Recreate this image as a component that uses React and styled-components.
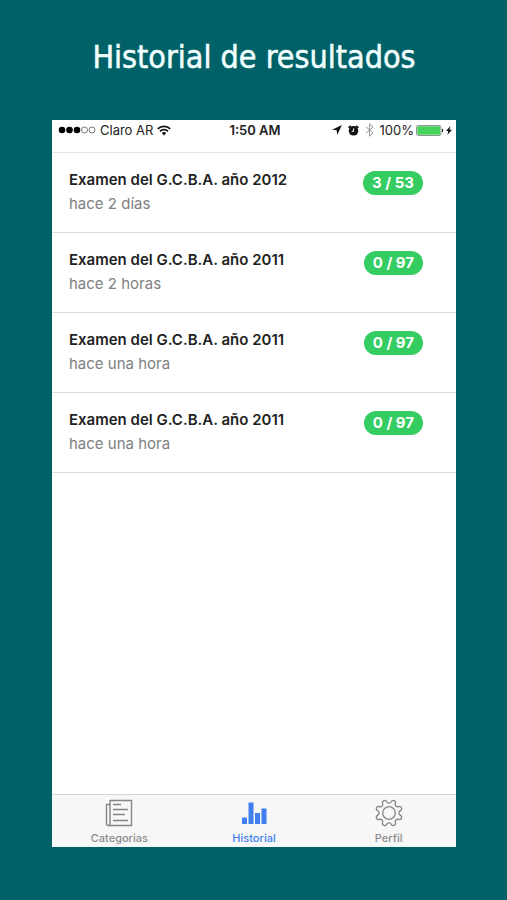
import React, {Component} from "react";
import styled, {createGlobalStyle} from "styled-components";

const GlobalStyle = createGlobalStyle`
  * {
    box-sizing: border-box;
  }
  body {
    margin: 0;
    background: #006268;
    font-family: Inter, "Liberation Sans", sans-serif;
  }
`;
const Page = styled.div`
  min-height: 100vh;
  padding: 0 51px 53px 52px;
  display: flex;
  flex-direction: column;
`;
const PageTitle = styled.h1`
  margin: 37px 0 43px;
  color: #f2ffff;
  font-family: "DejaVu Sans Condensed", "Open Sans", sans-serif;
  font-size: 32px;
  font-weight: 400;
  line-height: 40px;
  text-align: center;
  -webkit-text-stroke: 0.5px #f2ffff;
`;
const Screen = styled.div`
  flex: 1;
  display: flex;
  flex-direction: column;
  background: #fff;
`;
const StatusBar = styled.header`
  height: 33px;
  padding: 2px 4px 0 6px;
  display: grid;
  grid-template-columns: 1fr auto 1fr;
  align-items: start;
  border-bottom: 1px solid #e2e4e5;
  color: #222;
  font-size: 13px;
  line-height: 16px;
`;
const StatusGroup = styled.div`
  height: 16px;
  display: flex;
  align-items: center;
  justify-content: ${props => props.$end ? "flex-end" : "flex-start"};
  gap: ${props => props.$gap}px;
`;
const Clock = styled.time`
  font-weight: 600;
`;
const Results = styled.ul`
  flex: 1;
  margin: 0;
  padding: 0;
  list-style: none;
`;
const ResultRow = styled.li`
  height: 80px;
  padding: 17px 33px 0 17px;
  display: flex;
  justify-content: space-between;
  align-items: flex-start;
  border-bottom: 1px solid #dcdddf;
`;
const ResultTitle = styled.h2`
  margin: 0;
  color: #222;
  font-size: 15px;
  font-weight: 600;
  line-height: 20px;
`;
const ResultDate = styled.p`
  margin: 4px 0 0;
  color: #808080;
  font-size: 15px;
  line-height: 20px;
`;
const Score = styled.span`
  margin-top: 1px;
  padding: 0 9px;
  border-radius: 12px;
  background: #35cc62;
  color: #fff;
  font-size: 15px;
  font-weight: 700;
  line-height: 24px;
`;
const TabBar = styled.nav`
  height: 53px;
  display: flex;
  border-top: 1px solid #d4d6d7;
  background: #f7f7f8;
`;
const Tab = styled.a`
  flex: 1;
  padding-top: 4px;
  display: flex;
  flex-direction: column;
  align-items: center;
  gap: 4px;
  color: ${props => props.$active ? "#3f7ff0" : "#8c8c8c"};
  font-size: 11px;
  font-weight: 500;
  line-height: 14px;
  text-decoration: none;
`;

const results = [
  {id: 1, title: "Examen del G.C.B.A. año 2012", date: "hace 2 días", score: "3 / 53"},
  {id: 2, title: "Examen del G.C.B.A. año 2011", date: "hace 2 horas", score: "0 / 97"},
  {id: 3, title: "Examen del G.C.B.A. año 2011", date: "hace una hora", score: "0 / 97"},
  {id: 4, title: "Examen del G.C.B.A. año 2011", date: "hace una hora", score: "0 / 97"}
];

// Rounded outline of an eight-toothed gear: a smooth curve through the corner polygon
const gearOutline = (center, inner, outer) => {
  const corners = [];
  for (let i = 0; i < 8; i++) {
    [[inner, -9], [inner, 9], [outer, 14], [outer, 31]].forEach(([radius, offset]) => {
      const angle = (i * 45 + offset - 90) * Math.PI / 180;
      corners.push([center + radius * Math.cos(angle), center + radius * Math.sin(angle)]);
    });
  }
  const middle = (a, b) => `${(a[0] + b[0]) / 2} ${(a[1] + b[1]) / 2}`;
  const curves = corners.map((corner, i) => (
    `Q${corner[0]} ${corner[1]} ${middle(corner, corners[(i + 1) % corners.length])}`
  ));
  return `M${middle(corners[corners.length - 1], corners[0])}${curves.join("")}Z`;
};

const SignalIcon = () => (
  <svg width="38" height="8" viewBox="0 0 38 8" aria-hidden="true">
    <g fill="#000">
      <circle cx="4" cy="4" r="3.3"/>
      <circle cx="11.5" cy="4" r="3.3"/>
      <circle cx="19" cy="4" r="3.3"/>
    </g>
    <g fill="none" stroke="#555" strokeWidth="0.8">
      <circle cx="26.5" cy="4" r="3"/>
      <circle cx="34" cy="4" r="3"/>
    </g>
  </svg>
);
const WifiIcon = () => (
  <svg width="14" height="11" viewBox="0 0 14 11" aria-hidden="true">
    <g fill="none" stroke="#111" strokeWidth="1.7">
      <path d="M0.8 3.9a8.8 8.8 0 0 1 12.4 0"/>
      <path d="M3 6.3a5.6 5.6 0 0 1 8 0"/>
    </g>
    <path d="M4.8 8.1a3.1 3.1 0 0 1 4.4 0L7 10.4z" fill="#111"/>
  </svg>
);
const LocationIcon = () => (
  <svg width="10" height="10" viewBox="0 0 10 10" aria-hidden="true">
    <path d="M9.9 0.1L0.2 4.8L4.7 5.3L5.2 9.9z" fill="#111"/>
  </svg>
);
const AlarmIcon = () => (
  <svg width="11" height="11" viewBox="0 0 11 11" aria-hidden="true">
    <circle cx="5.5" cy="5.8" r="4.8" fill="#111"/>
    <path d="M0.6 2.9L2.9 0.8M10.4 2.9L8.1 0.8" stroke="#111" strokeWidth="1.6"/>
    <path d="M5.6 3.4v2.9H3.7" fill="none" stroke="#fff" strokeWidth="1"/>
  </svg>
);
const BluetoothIcon = () => (
  <svg width="9" height="14" viewBox="0 0 9 14" aria-hidden="true">
    <path d="M1 3.8l7 6.2-3.5 3.2V0.8L8 4 1 10.2" fill="none" stroke="#999" strokeWidth="1"/>
  </svg>
);
const BatteryIcon = () => (
  <svg width="28" height="11" viewBox="0 0 28 11" aria-hidden="true">
    <rect x="0.5" y="0.5" width="24.5" height="10" rx="1.8" fill="#fff" stroke="#777" strokeWidth="0.8"/>
    <rect x="1.3" y="1.3" width="23" height="8.4" rx="1" fill="#46d35b"/>
    <path d="M26 3.5a2.2 2.2 0 0 1 0 4z" fill="#222"/>
  </svg>
);
const ChargeIcon = () => (
  <svg width="6" height="9" viewBox="0 0 6 9" aria-hidden="true">
    <path d="M4.4 0L0 5h2.3L1.4 9 6 3.8H3.5z" fill="#111"/>
  </svg>
);
const PaperIcon = () => (
  <svg width="28" height="28" viewBox="0 0 28 28" fill="none" stroke="#858585" strokeWidth="1.4" aria-hidden="true">
    <path d="M5 1.5h21.5v25H3.4A2 2 0 0 1 1.5 24.5V5.5H5"/>
    <path d="M5 1v23.5a1.6 1.6 0 0 1-1.6 2"/>
    <path d="M8 5.5h8M8 10.5h15M8 15.5h12M8 21.5h15"/>
  </svg>
);
const StatsIcon = () => (
  <svg width="28" height="28" viewBox="0 0 28 28" fill="#3f7ff0" aria-hidden="true">
    <path d="M2 18.5h5V25H2zM8.5 3.5h5V25h-5zM15 14h5v11h-5zM21.5 9.5h5V25h-5z"/>
  </svg>
);
const GearIcon = () => (
  <svg width="28" height="28" viewBox="0 0 28 28" fill="none" stroke="#858585" strokeWidth="1.3" aria-hidden="true">
    <path d={gearOutline(14, 10, 13.6)}/>
    <circle cx="14" cy="14" r="6.3"/>
  </svg>
);

class App extends Component {
  render() {
    return (
      <Page>
        <GlobalStyle/>
        <PageTitle>Historial de resultados</PageTitle>
        <Screen>
          <StatusBar>
            <StatusGroup $gap={4}>
              <SignalIcon/>
              <span>Claro AR</span>
              <WifiIcon/>
            </StatusGroup>
            <Clock>1:50 AM</Clock>
            <StatusGroup $end $gap={6}>
              <LocationIcon/>
              <AlarmIcon/>
              <BluetoothIcon/>
              <StatusGroup $gap={2}>
                <span>100%</span>
                <BatteryIcon/>
                <ChargeIcon/>
              </StatusGroup>
            </StatusGroup>
          </StatusBar>
          <Results>
            {results.map(result => (
              <ResultRow key={result.id}>
                <div>
                  <ResultTitle>{result.title}</ResultTitle>
                  <ResultDate>{result.date}</ResultDate>
                </div>
                <Score>{result.score}</Score>
              </ResultRow>
            ))}
          </Results>
          <TabBar>
            <Tab href="#categorias">
              <PaperIcon/>
              Categorias
            </Tab>
            <Tab href="#historial" $active aria-current="page">
              <StatsIcon/>
              Historial
            </Tab>
            <Tab href="#perfil">
              <GearIcon/>
              Perfil
            </Tab>
          </TabBar>
        </Screen>
      </Page>
    )
  }
}

export default App;
